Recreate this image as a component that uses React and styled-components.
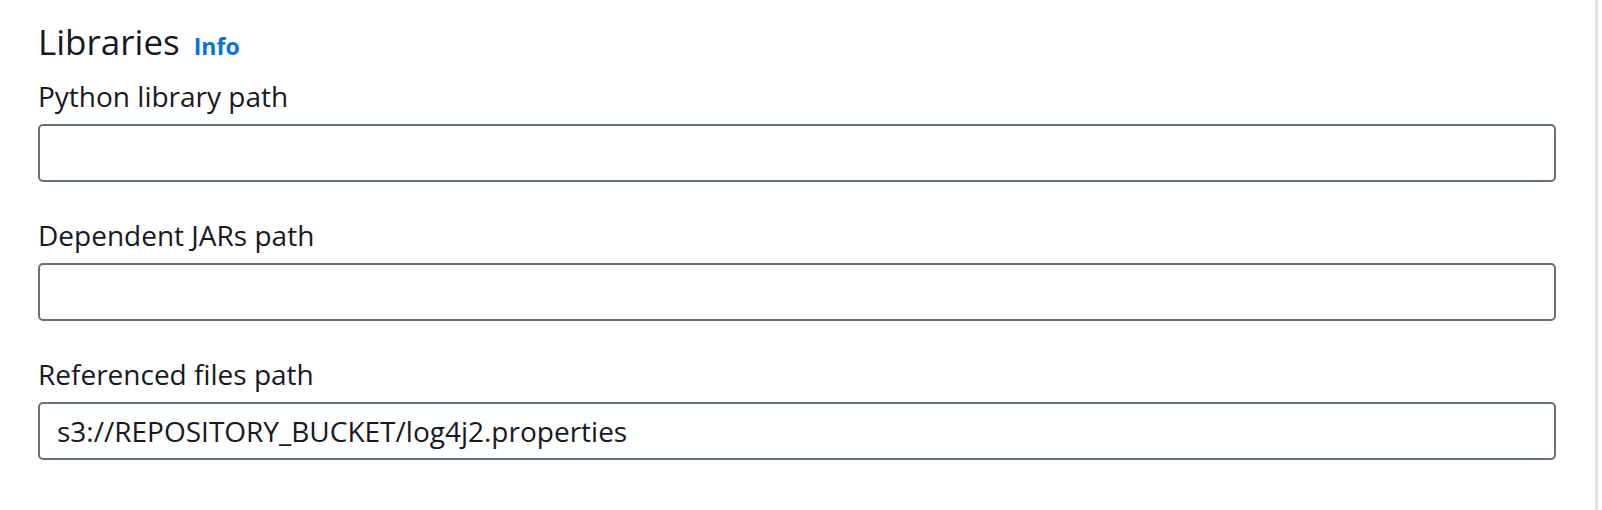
import React from "react";
import styled, { createGlobalStyle } from "styled-components";

const GlobalStyle = createGlobalStyle`
  html, body {
    margin: 0;
    padding: 0;
    background: #ffffff;
  }
  body {
    font-family: "Open Sans", Lato, sans-serif;
    color: #16191f;
  }
`;

const Panel = styled.div`
  width: 1598px;
  height: 510px;
  box-sizing: border-box;
  border-right: 3px solid #e3e5e8;
  padding: 17px 39px 0 38px;
`;

const Header = styled.div`
  display: flex;
  align-items: baseline;
  gap: 14px;
  height: 50px;
`;

const Title = styled.h2`
  margin: 0;
  font-size: 35px;
  font-weight: 400;
  line-height: 50px;
`;

const InfoLink = styled.a`
  font-size: 23px;
  font-weight: 700;
  color: #0972d3;
  text-decoration: none;
`;

const Fields = styled.div`
  display: flex;
  flex-direction: column;
  gap: 35px;
  margin-top: 11px;
`;

const Field = styled.div`
  display: flex;
  flex-direction: column;
  gap: 10px;
`;

const Label = styled.label`
  font-size: 28px;
  line-height: 36px;
`;

const Input = styled.input`
  box-sizing: border-box;
  width: 100%;
  height: 58px;
  border: 2px solid #687078;
  border-radius: 5px;
  padding: 0 17px;
  font-family: "Open Sans", Lato, sans-serif;
  font-size: 28px;
  color: #16191f;
  background: #ffffff;
  outline: none;
`;

const fields = [
  { label: "Python library path", value: "" },
  { label: "Dependent JARs path", value: "" },
  { label: "Referenced files path", value: "s3://REPOSITORY_BUCKET/log4j2.properties" },
];

const App = () => {
  return (
    <>
      <GlobalStyle />
      <Panel>
        <Header>
          <Title>Libraries</Title>
          <InfoLink href="#">Info</InfoLink>
        </Header>
        <Fields>
          {fields.map((f) => (
            <Field key={f.label}>
              <Label>{f.label}</Label>
              <Input defaultValue={f.value} />
            </Field>
          ))}
        </Fields>
      </Panel>
    </>
  );
};

export default App;
